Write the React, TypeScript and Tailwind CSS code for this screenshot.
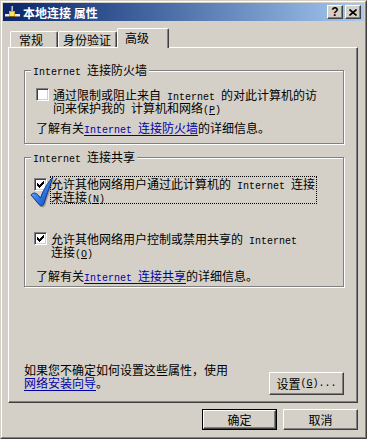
import type { ReactNode } from 'react'

const raised =
  'bg-[#d4d0c8] border border-t-white border-l-white border-r-[#404040] border-b-[#404040] shadow-[inset_-1px_-1px_0_#808080]'

const Mono = ({ children }: { children: ReactNode }) => (
  <span className="font-['Liberation_Mono',monospace] text-[10px] leading-[10px]">{children}</span>
)

const Link = ({ children }: { children: ReactNode }) => (
  <span className="text-[#0000a8] underline underline-offset-[2px]">{children}</span>
)

// one text line, fixed height so mixed fonts can't grow it
const Line = ({ className = '', children }: { className?: string; children: ReactNode }) => (
  <div className={`h-[13px] whitespace-nowrap ${className}`}>{children}</div>
)

const checkPixels = [
  [6, 0, 1], [5, 1, 2], [0, 2, 1], [4, 2, 3], [0, 3, 2], [3, 3, 3], [0, 4, 5], [1, 5, 3], [2, 6, 1],
]

const Checkbox = ({ checked, className = '' }: { checked?: boolean; className?: string }) => (
  <div
    className={`w-[13px] h-[13px] shrink-0 bg-white border border-t-[#808080] border-l-[#808080] border-r-white border-b-white shadow-[inset_1px_1px_0_#404040,inset_-1px_-1px_0_#d4d0c8] flex items-center justify-center ${className}`}
  >
    {checked && (
      <svg width="7" height="7" viewBox="0 0 7 7" shapeRendering="crispEdges">
        {checkPixels.map(([x, y, w]) => (
          <rect key={`${x}-${y}`} x={x} y={y} width={w} height={1} fill="#000" />
        ))}
      </svg>
    )}
  </div>
)

const GroupBox = ({ title, className = '', children }: { title: ReactNode; className?: string; children: ReactNode }) => (
  <div className={`relative w-[320px] border border-[#808080] shadow-[inset_1px_1px_0_#fff,1px_1px_0_#fff] ${className}`}>
    <div className="absolute -top-[8px] left-[6px] px-[2px] h-[13px] bg-[#d4d0c8] whitespace-nowrap">{title}</div>
    {children}
  </div>
)

const TitleIcon = () => (
  <svg width="15" height="14" viewBox="0 0 15 14" shapeRendering="crispEdges">
    <rect x="7" y="1" width="1" height="6" fill="#c0c0c0" />
    <rect x="6" y="1" width="1" height="6" fill="#808080" />
    <rect x="0" y="9" width="15" height="2" fill="#e8e8e8" />
    <rect x="0" y="11" width="15" height="1" fill="#808080" />
    <rect x="4" y="6" width="6" height="6" fill="#d8b020" />
    <rect x="5" y="7" width="4" height="4" fill="#f8e070" />
    <rect x="4" y="11" width="6" height="1" fill="#806000" />
  </svg>
)

const BigCheck = () => (
  <svg width="26" height="33" viewBox="0 0 26 33" className="absolute left-[5px] top-[18px]">
    <defs>
      <linearGradient id="bc" x1="0" y1="0" x2="1" y2="1">
        <stop offset="0" stopColor="#9cd0ff" />
        <stop offset="0.45" stopColor="#3a86ee" />
        <stop offset="1" stopColor="#0c3cb0" />
      </linearGradient>
    </defs>
    <path
      d="M2.5 20.5 C4 18 7 18 9 20 L12 23.5 C15 15 19 8 24.5 2.5 C22.5 9 18.5 19 15.5 29 C14.5 32 11.5 32 10.5 30 Z"
      fill="#000"
      opacity="0.25"
    />
    <path
      d="M1 19 C2.5 16.5 5.5 16.5 7.5 18.5 L10.5 22 C13.5 13.5 17.5 6.5 23 1 C21 7.5 17 17.5 14 27.5 C13 30.5 10 30.5 9 28.5 Z"
      fill="url(#bc)"
      stroke="#0a2a80"
      strokeWidth="0.9"
    />
  </svg>
)

export default function App() {
  return (
    <div className="w-[367px] h-[439px] bg-[#d4d0c8] border border-t-[#d4d0c8] border-l-[#d4d0c8] border-r-[#404040] border-b-[#404040] font-['Noto_Sans_CJK_SC',sans-serif] text-[12px] leading-[13px] text-black select-none">
      <div className="h-full border border-t-white border-l-white border-r-[#808080] border-b-[#808080] p-px flex flex-col">
        {/* title bar */}
        <div className="h-[18px] shrink-0 flex items-center bg-linear-to-r from-[#0a246a] to-[#a6caf0] pl-[2px] pr-[3px]">
          <TitleIcon />
          <span className="ml-[3px] font-bold text-white">本地连接 属性</span>
          <div className="ml-auto flex gap-[2px]">
            <div className={`w-[16px] h-[14px] ${raised} flex items-center justify-center`}>
              <span className="font-['Liberation_Sans',sans-serif] font-bold text-[12px] leading-[12px]">?</span>
            </div>
            <div className={`w-[16px] h-[14px] ${raised} flex items-center justify-center`}>
              <svg width="8" height="7" viewBox="0 0 8 7">
                <path d="M0.5 0.5 L7.5 6.5 M7.5 0.5 L0.5 6.5" stroke="#000" strokeWidth="1.6" />
              </svg>
            </div>
          </div>
        </div>

        {/* tabs */}
        <div className="mt-[7px] h-[19px] pl-[7px] flex items-end">
          <div className="w-[48px] h-[16px] pl-[8px] flex items-center border-t border-l border-r border-t-white border-l-white border-r-[#404040] rounded-t-[2px] shadow-[inset_-1px_0_0_#808080]">
            常规
          </div>
          <div className="w-[59px] h-[16px] pl-[4px] flex items-center border-t border-l border-r border-t-white border-l-white border-r-[#404040] rounded-t-[2px] shadow-[inset_-1px_0_0_#808080]">
            身份验证
          </div>
          <div className="relative z-10 -mb-px w-[52px] h-[20px] pl-[7px] pt-[2px] bg-[#d4d0c8] border-t border-l border-r border-t-white border-l-white border-r-[#404040] rounded-t-[2px] shadow-[inset_-1px_0_0_#808080]">
            高级
          </div>
        </div>

        {/* panel */}
        <div className={`ml-[5px] w-[350px] h-[356px] ${raised} pl-[15px] flex flex-col`}>
          <GroupBox title={<><Mono>Internet </Mono>连接防火墙</>} className="mt-[22px] h-[74px] pt-[17px] pl-[11px]">
            <div className="flex items-start gap-[4px]">
              <Checkbox />
              <div>
                <Line>
                  通过限制或阻止来自<Mono> Internet </Mono>的对此计算机的访
                </Line>
                <Line>
                  问来保护我的<Mono> </Mono>计算机和网络<Mono>(<span className="underline">P</span>)</Mono>
                </Line>
              </div>
            </div>
            <Line className="mt-[7px]">
              了解有关<Link><Mono>Internet </Mono>连接防火墙</Link>的详细信息。
            </Line>
          </GroupBox>

          <GroupBox title={<><Mono>Internet </Mono>连接共享</>} className="mt-[13px] h-[130px] pt-[18px] pl-[9px]">
            <div className="flex items-start gap-[3px]">
              <Checkbox checked className="mt-[2px]" />
              <div className="w-[267px] border border-dotted border-black">
                <Line>
                  允许其他网络用户通过此计算机的<Mono> Internet </Mono>连接
                </Line>
                <Line>
                  来连接<Mono>(<span className="underline">N</span>)</Mono>
                </Line>
              </div>
            </div>
            <div className="mt-[27px] flex items-start gap-[3px]">
              <Checkbox checked className="mt-[1px]" />
              <div className="border border-transparent">
                <Line>
                  允许其他网络用户控制或禁用共享的<Mono> Internet</Mono>
                </Line>
                <Line>
                  连接<Mono>(<span className="underline">O</span>)</Mono>
                </Line>
              </div>
            </div>
            <Line className="mt-[10px] ml-[2px]">
              了解有关<Link><Mono>Internet </Mono>连接共享</Link>的详细信息。
            </Line>
            <BigCheck />
          </GroupBox>

          <div className="flex-1" />

          <div className="w-[320px] pb-[7px] flex items-end justify-between">
            <div className="mb-[6px]">
              <Line>如果您不确定如何设置这些属性，使用</Line>
              <Line>
                <Link>网络安装向导</Link>。
              </Line>
            </div>
            <div className={`w-[75px] h-[23px] ${raised} flex items-center justify-center`}>
              设置<Mono>(<span className="underline">G</span>)...</Mono>
            </div>
          </div>
        </div>

        {/* dialog buttons */}
        <div className="mt-[6px] ml-[5px] w-[350px] flex justify-end gap-[6px]">
          <div className="w-[75px] h-[21px] border border-black">
            <div className={`h-full ${raised} flex items-center justify-center`}>确定</div>
          </div>
          <div className={`w-[75px] h-[21px] ${raised} flex items-center justify-center`}>取消</div>
        </div>
      </div>
    </div>
  )
}
